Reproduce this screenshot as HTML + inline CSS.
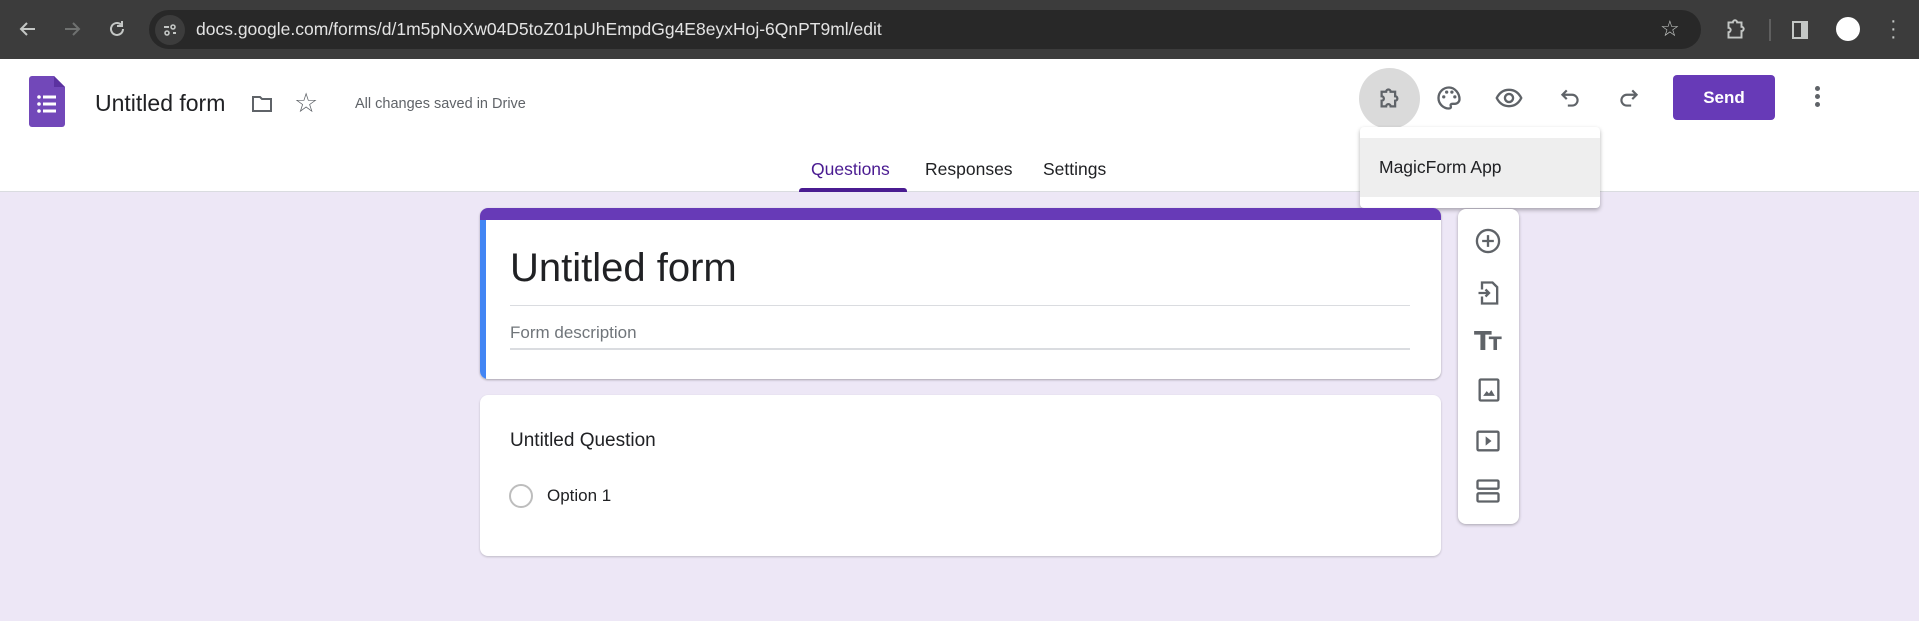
<!DOCTYPE html>
<html><head><meta charset="utf-8"><style>
*{box-sizing:border-box;margin:0;padding:0}
body{width:1919px;height:621px;overflow:hidden;background:#ede7f6;font-family:"Liberation Sans",Arial,sans-serif;position:relative}
.abs{position:absolute}
svg{display:block}
</style></head><body>
<!-- chrome bar -->
<div class="abs" style="left:0;top:0;width:1919px;height:59px;background:#3c3c3c"></div>
<div class="abs" style="left:149px;top:10px;width:1552px;height:39px;border-radius:20px;background:#282828"></div>
<svg class="abs" style="left:16px;top:17px" width="24" height="24" viewBox="0 0 24 24"><path d="M19 12H5M11 6l-6 6 6 6" stroke="#c4c7c5" stroke-width="2" fill="none"/></svg>
<svg class="abs" style="left:60px;top:17px" width="24" height="24" viewBox="0 0 24 24"><path d="M5 12h14M13 6l6 6-6 6" stroke="#6f7170" stroke-width="2" fill="none"/></svg>
<svg class="abs" style="left:105px;top:17px" width="24" height="24" viewBox="0 0 24 24"><path d="M18 12a6 6 0 1 1-2-4.5" stroke="#c4c7c5" stroke-width="2" fill="none"/><path d="M17 4v5h-5" stroke="#c4c7c5" stroke-width="2" fill="none"/></svg>
<div class="abs" style="left:155px;top:15px;width:30px;height:30px;border-radius:15px;background:#3c3c3c"></div>
<svg class="abs" style="left:160px;top:20px" width="20" height="20" viewBox="0 0 20 20"><path d="M4 7h5M13 13h3" stroke="#c4c7c5" stroke-width="2"/><circle cx="13" cy="7" r="2" stroke="#c4c7c5" fill="none" stroke-width="1.6"/><circle cx="7" cy="13" r="2" stroke="#c4c7c5" fill="none" stroke-width="1.6"/></svg>
<div class="abs" style="left:196px;top:18px;color:#e3e3e3;font-size:17.5px;line-height:22px">docs.google.com/forms/d/1m5pNoXw04D5toZ01pUhEmpdGg4E8eyxHoj-6QnPT9ml/edit</div>
<div class="abs" style="left:1660px;top:16px;color:#c4c7c5;font-size:22px">☆</div>
<svg class="abs" style="left:1722px;top:17px" width="26" height="26" viewBox="0 0 24 24"><path d="M6 5h4a2 2 0 0 1 4 0h4v4a2 2 0 0 1 0 4v6H6v-5a2 2 0 0 0 0-4z" stroke="#c4c7c5" stroke-width="1.8" fill="none"/></svg>
<div class="abs" style="left:1769px;top:19px;width:2px;height:22px;background:#5f5f5f"></div>
<div class="abs" style="left:1792px;top:21px;width:16px;height:18px;border:2px solid #c4c7c5;border-right-width:7px"></div>
<div class="abs" style="left:1836px;top:17px;width:24px;height:24px;border-radius:50%;background:#fff"></div>
<div class="abs" style="left:1890px;top:17px;color:#c4c7c5;font-size:20px;line-height:8px;width:6px;text-align:center">·<br>·<br>·</div>

<!-- header -->
<div class="abs" style="left:0;top:59px;width:1919px;height:133px;background:#fff;border-bottom:1px solid #dadce0"></div>
<svg class="abs" style="left:29px;top:76px" width="36" height="51" viewBox="0 0 36 51"><path d="M3 0h22l11 11v37a3 3 0 0 1-3 3H3a3 3 0 0 1-3-3V3a3 3 0 0 1 3-3z" fill="#7248b9"/><path d="M25 0v11h11z" fill="#5b32a0"/><g fill="#fff"><circle cx="10" cy="21" r="1.8"/><circle cx="10" cy="28" r="1.8"/><circle cx="10" cy="35" r="1.8"/><rect x="14" y="19.5" width="13" height="3"/><rect x="14" y="26.5" width="13" height="3"/><rect x="14" y="33.5" width="13" height="3"/></g></svg>
<div class="abs" style="left:95px;top:90px;font-size:23px;color:#202124">Untitled form</div>
<svg class="abs" style="left:249px;top:92px" width="26" height="24" viewBox="0 0 24 24"><path d="M3 5h7l2 2h9v12H3z" stroke="#5f6368" stroke-width="2" fill="none"/></svg>
<div class="abs" style="left:294px;top:88px;font-size:27px;color:#5f6368">☆</div>
<div class="abs" style="left:355px;top:96px;font-size:14.5px;color:#5f6368">All changes saved in Drive</div>

<div class="abs" style="left:1359px;top:68px;width:61px;height:61px;border-radius:50%;background:#dadada"></div>
<svg class="abs" style="left:1376px;top:85px" width="27" height="27" viewBox="0 0 24 24"><path d="M5 6h4a2 2 0 0 1 4 0h4v4a2 2 0 0 1 0 4v5h-4a2 2 0 0 0-4 0H5v-5a2 2 0 0 0 0-4z" stroke="#5f6368" stroke-width="2" fill="none"/></svg>
<svg class="abs" style="left:1435px;top:84px" width="28" height="28" viewBox="0 0 24 24"><path d="M12 3a9 9 0 0 0 0 18c1.5 0 2-1 1.5-2s0-2 1.5-2h2a4 4 0 0 0 4-4c0-5-4-10-9-10z" stroke="#5f6368" stroke-width="2" fill="none"/><circle cx="7.5" cy="11" r="1.4" fill="#5f6368"/><circle cx="10" cy="7" r="1.4" fill="#5f6368"/><circle cx="14.5" cy="7" r="1.4" fill="#5f6368"/><circle cx="17" cy="11" r="1.4" fill="#5f6368"/></svg>
<svg class="abs" style="left:1494px;top:84px" width="30" height="28" viewBox="0 0 24 24"><path d="M1.5 12C4 7 8 5 12 5s8 2 10.5 7C20 17 16 19 12 19s-8-2-10.5-7z" stroke="#5f6368" stroke-width="2" fill="none"/><circle cx="12" cy="12" r="3.5" stroke="#5f6368" stroke-width="2" fill="none"/></svg>
<svg class="abs" style="left:1557px;top:85px" width="26" height="26" viewBox="0 0 24 24"><path d="M9 5L5 9l4 4M5 9h9a5 5 0 0 1 0 10h-4" stroke="#5f6368" stroke-width="2" fill="none"/></svg>
<svg class="abs" style="left:1616px;top:85px" width="26" height="26" viewBox="0 0 24 24"><path d="M15 5l4 4-4 4M19 9h-9a5 5 0 0 0 0 10h4" stroke="#5f6368" stroke-width="2" fill="none"/></svg>
<div class="abs" style="left:1673px;top:75px;width:102px;height:45px;border-radius:4px;background:#673ab7;color:#fff;font-size:17px;font-weight:bold;text-align:center;line-height:45px">Send</div>
<div class="abs" style="left:1814px;top:86px;width:8px"><div style="width:5px;height:5px;border-radius:50%;background:#5f6368;margin:0 0 3px 1px"></div><div style="width:5px;height:5px;border-radius:50%;background:#5f6368;margin:0 0 3px 1px"></div><div style="width:5px;height:5px;border-radius:50%;background:#5f6368;margin:0 0 0 1px"></div></div>

<div class="abs" style="left:811px;top:159px;font-size:17.5px;color:#4a1b91">Questions</div>
<div class="abs" style="left:925px;top:159px;font-size:17.5px;color:#202124">Responses</div>
<div class="abs" style="left:1043px;top:159px;font-size:17.5px;color:#202124">Settings</div>
<div class="abs" style="left:799px;top:188px;width:108px;height:4px;background:#4a1b91;border-radius:3px 3px 0 0"></div>

<!-- dropdown -->
<div class="abs" style="left:1360px;top:127px;width:240px;height:81px;background:#fff;border-radius:4px;box-shadow:0 2px 4px rgba(0,0,0,.3)"><div style="margin-top:11px;height:59px;background:#eeeeee;font-size:17.5px;color:#202124;line-height:59px;padding-left:19px">MagicForm App</div></div>

<!-- card 1 -->
<div class="abs" style="left:480px;top:208px;width:961px;height:171px;background:#fff;border-radius:8px;box-shadow:0 1px 2px rgba(0,0,0,.3);overflow:hidden">
<div style="height:12px;background:#673ab7"></div>
<div class="abs" style="left:0;top:12px;width:6px;height:159px;background:#4285f4"></div>
<div class="abs" style="left:30px;top:38px;font-size:40px;color:#202124">Untitled form</div>
<div class="abs" style="left:30px;top:97px;width:900px;height:1px;background:#dadce0"></div>
<div class="abs" style="left:30px;top:115px;font-size:17px;color:#70757a">Form description</div>
<div class="abs" style="left:30px;top:140px;width:900px;height:2px;background:#dadce0"></div>
</div>
<!-- card 2 -->
<div class="abs" style="left:480px;top:395px;width:961px;height:161px;background:#fff;border-radius:8px;box-shadow:0 1px 2px rgba(0,0,0,.2)">
<div class="abs" style="left:30px;top:35px;font-size:19px;color:#202124">Untitled Question</div>
<div class="abs" style="left:29px;top:89px;width:24px;height:24px;border:2px solid #bdbdbd;border-radius:50%"></div>
<div class="abs" style="left:67px;top:91px;font-size:17px;color:#202124">Option 1</div>
</div>
<!-- side toolbar -->
<div class="abs" style="left:1458px;top:209px;width:61px;height:315px;background:#fff;border-radius:8px;box-shadow:0 1px 3px rgba(0,0,0,.3)"></div>
<svg class="abs" style="left:1474px;top:227px" width="28" height="28" viewBox="0 0 24 24"><circle cx="12" cy="12" r="9.5" stroke="#5f6368" stroke-width="2" fill="none"/><path d="M12 7v10M7 12h10" stroke="#5f6368" stroke-width="2"/></svg>
<svg class="abs" style="left:1475px;top:279px" width="28" height="28" viewBox="0 0 24 24"><path d="M6 9V3h9l4 4v14H6v-6" stroke="#5f6368" stroke-width="2" fill="none"/><path d="M3 12h9M9 9l3 3-3 3" stroke="#5f6368" stroke-width="2" fill="none"/></svg>
<div class="abs" style="left:1474px;top:327px;font-size:26px;font-weight:bold;color:#5f6368;font-family:'DejaVu Sans',sans-serif;letter-spacing:-3px">T<span style="font-size:19px">T</span></div>
<svg class="abs" style="left:1475px;top:376px" width="28" height="28" viewBox="0 0 24 24"><rect x="4" y="3" width="16" height="18" rx="1" stroke="#5f6368" stroke-width="2" fill="none"/><path d="M7 17l3-4 2 2 2-3 3 5z" fill="#5f6368"/></svg>
<svg class="abs" style="left:1474px;top:427px" width="28" height="28" viewBox="0 0 24 24"><rect x="3" y="4" width="18" height="16" rx="1" stroke="#5f6368" stroke-width="2" fill="none"/><path d="M10 8v8l5-4z" fill="#5f6368"/></svg>
<svg class="abs" style="left:1474px;top:477px" width="28" height="28" viewBox="0 0 24 24"><rect x="3" y="3" width="18" height="7" rx="1" stroke="#5f6368" stroke-width="2" fill="none"/><rect x="3" y="14" width="18" height="7" rx="1" stroke="#5f6368" stroke-width="2" fill="none"/></svg>
</body></html>
